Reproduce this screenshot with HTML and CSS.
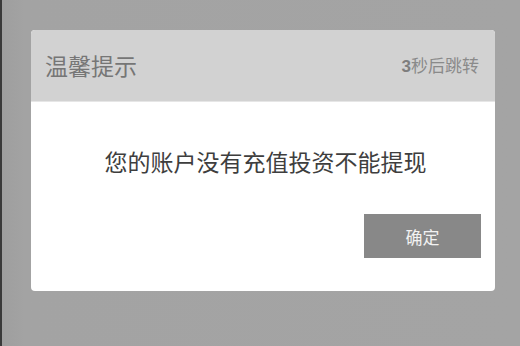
FILE: index.html
```html
<!DOCTYPE html>
<html lang="zh-CN">
<head>
<meta charset="utf-8">
<link rel="stylesheet" href="styles.css">
</head>
<body>
<div class="page">
  <div class="dialog">
    <div class="dialog-header">
      <span class="dialog-title">温馨提示</span>
      <span class="countdown"><b class="num">3</b>秒后跳转</span>
    </div>
    <div class="dialog-body">
      <p class="message">您的账户没有充值投资不能提现</p>
      <div class="actions">
        <button class="btn-ok">确定</button>
      </div>
    </div>
  </div>
</div>
</body>
</html>
```

FILE: styles.css
```css
html, body {
  margin: 0;
  padding: 0;
  width: 520px;
  height: 346px;
  overflow: hidden;
  background: #a4a4a4;
  font-family: "Noto Sans CJK SC", "Noto Sans", sans-serif;
}
.page {
  box-sizing: border-box;
  width: 520px;
  height: 346px;
  border-left: 2px solid #3a3a3a;
  padding: 30px 0 0 29px;
  background: linear-gradient(to right, #9e9e9e 0, #a3a3a3 22px, #a4a4a4 100%);
}
.dialog {
  width: 464px;
  height: 261px;
  border-radius: 4px;
  overflow: hidden;
  background: #ffffff;
  display: flex;
  flex-direction: column;
}
.dialog-header {
  height: 72px;
  flex: none;
  background: #d2d2d2;
  display: flex;
  align-items: center;
  justify-content: space-between;
  padding: 0 16px 0 14px;
  border-bottom: 1px solid #e6e6e6;
  box-sizing: border-box;
}
.dialog-title {
  font-size: 23px;
  color: #767676;
  line-height: 1;
}
.countdown {
  font-size: 17px;
  color: #8a8a8a;
  line-height: 1;
}
.countdown .num {
  font-family: "Liberation Sans", sans-serif;
  font-weight: bold;
  font-size: 17px;
  color: #7e7e7e;
}
.dialog-body {
  flex: 1;
  display: flex;
  flex-direction: column;
  padding: 43px 14px 0 14px;
}
.message {
  margin: 0;
  text-align: center;
  font-size: 23px;
  line-height: 32px;
  color: #3e3e3e;
  padding-left: 5px;
}
.actions {
  display: flex;
  justify-content: flex-end;
  margin-top: 37px;
}
.btn-ok {
  width: 117px;
  height: 44px;
  border: none;
  border-radius: 0;
  background: #888888;
  color: #f2f2f2;
  font-family: "Noto Sans CJK SC", sans-serif;
  font-size: 17px;
  padding: 0;
  cursor: pointer;
}
```
